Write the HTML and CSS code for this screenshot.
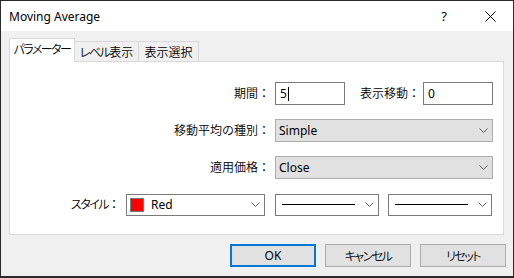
FILE: index.html
```html
<!DOCTYPE html>
<html lang="ja">
  <head>
    <meta charset="UTF-8" />
    <title>Moving Average</title>
    <link rel="stylesheet" href="styles.css">
  </head>
  <body>
    <div class="window">
      <div class="titlebar">
        <span class="title">Moving Average</span>
        <span class="caption-btn">?</span>
        <span class="caption-btn">
          <svg width="11" height="11" viewBox="0 0 11 11"><path d="M0.5 0.5 L10.5 10.5 M10.5 0.5 L0.5 10.5" stroke="#000" stroke-width="1" fill="none"/></svg>
        </span>
      </div>
      <div class="content">
        <div class="tabs">
          <div class="tab active"><span class="kana">パラメーター</span></div>
          <div class="tab second-tab"><span class="kana">レベル</span>表示</div>
          <div class="tab third-tab">表示選択</div>
        </div>
        <div class="panel">
          <div class="form">
            <span class="label">期間：</span>
            <div class="pair">
              <div class="input">5<span class="caret"></span></div>
              <span class="label inline">表示移動：</span>
              <div class="input">0</div>
            </div>
            <span class="label">移動平均の種別：</span>
            <div class="select">
              <span>Simple</span>
              <svg class="chev" width="9" height="5" viewBox="0 0 9 5"><path d="M0.5 0.5 L4.5 4.5 L8.5 0.5" stroke="#606060" fill="none"/></svg>
            </div>
            <span class="label">適用価格：</span>
            <div class="select">
              <span>Close</span>
              <svg class="chev" width="9" height="5" viewBox="0 0 9 5"><path d="M0.5 0.5 L4.5 4.5 L8.5 0.5" stroke="#606060" fill="none"/></svg>
            </div>
          </div>
          <div class="style-row">
            <span class="label style-label"><span class="kana">スタイル</span>：</span>
            <div class="combo color">
              <span class="swatch"></span>
              <span class="combo-text">Red</span>
              <svg class="chev" width="9" height="5" viewBox="0 0 9 5"><path d="M0.5 0.5 L4.5 4.5 L8.5 0.5" stroke="#606060" fill="none"/></svg>
            </div>
            <div class="combo line">
              <span class="stroke"></span>
              <svg class="chev" width="9" height="5" viewBox="0 0 9 5"><path d="M0.5 0.5 L4.5 4.5 L8.5 0.5" stroke="#606060" fill="none"/></svg>
            </div>
            <div class="combo line second">
              <span class="stroke"></span>
              <svg class="chev" width="9" height="5" viewBox="0 0 9 5"><path d="M0.5 0.5 L4.5 4.5 L8.5 0.5" stroke="#606060" fill="none"/></svg>
            </div>
          </div>
        </div>
      </div>
      <div class="buttons">
        <button class="btn default">OK</button>
        <button class="btn"><span class="kana">キャンセル</span></button>
        <button class="btn"><span class="kana">リセット</span></button>
      </div>
    </div>
  </body>
</html>
```

FILE: styles.css
```css
body {
  margin: 0;  font-family: "Noto Sans", "Noto Sans CJK JP", sans-serif;  font-size: 12px;  font-weight: 350;  color: #000;
}
.window {
  width: 514px;  height: 278px;  box-sizing: border-box;  border: 1px solid #2b2b2b;  border-bottom-width: 2px;  background-color: #f0f0f0;  display: flex;  flex-direction: column;
}
.titlebar {
  height: 30px;  background-color: #fff;  display: flex;  align-items: center;
}
.title {
  flex: 1;  padding-left: 8px;  font-weight: 400;
}
.caption-btn {
  width: 46px;  height: 30px;  display: flex;  align-items: center;  justify-content: center;  font-size: 13px;  font-weight: 400;
}
.content {
  padding: 8px 9px 0 8px;
}
.tabs {
  display: flex;  align-items: flex-end;  height: 23px;  margin-bottom: -1px;
}
.tab {
  height: 19px;  margin-bottom: 1px;  border: 1px solid #d9d9d9;  border-bottom: none;  margin-left: -1px;  display: flex;  align-items: center;  justify-content: center;  white-space: nowrap;  background-color: #f0f0f0;
}
.kana {
  font-feature-settings: "palt";  letter-spacing: -1.5px;
}
.tab.active {
  width: 64px;  height: 23px;  margin-bottom: 0;  margin-left: 0;  background-color: #fff;  position: relative;  z-index: 1;  align-items: flex-start;  line-height: 22px;
}
.tab.second-tab {
  width: 63px;
}
.tab.third-tab {
  width: 59px;
}
.panel {
  height: 174px;  box-sizing: border-box;  border: 1px solid #d9d9d9;  background-color: #fff;  padding: 20px 10px 0 0;
}
.form {
  display: grid;  grid-template-columns: 260px 218px;  column-gap: 5px;  row-gap: 14px;  align-items: center;
}
.label {
  text-align: right;  white-space: nowrap;  line-height: 23px;
}
.pair {
  display: flex;  align-items: center;
}
.label.inline {
  margin: 0 3px 0 15px;
}
.input {
  width: 70px;  height: 23px;  box-sizing: border-box;  border: 1px solid #7a7a7a;  padding-left: 4px;  line-height: 20px;  display: flex;  align-items: center;  font-weight: 400;
}
.caret {
  width: 1px;  height: 14px;  background-color: #000;  margin-left: 1px;
}
.select {
  height: 23px;  box-sizing: border-box;  border: 1px solid #adadad;  background-color: #e1e1e1;  padding: 0 3px 0 3px;  display: flex;  align-items: center;  justify-content: space-between;  font-weight: 400;
}
.chev {
  margin-right: 1px;
}
.style-row {
  display: flex;  align-items: center;  margin-top: 14px;  height: 23px;
}
.style-label {
  width: 110px;  margin-right: 6px;
}
.combo {
  height: 22px;  box-sizing: border-box;  border: 1px solid #7a7a7a;  background-color: #fff;  display: flex;  align-items: center;  padding: 0 3px;  font-weight: 400;
}
.combo.color {
  width: 139px;  margin-right: 10px;
}
.combo.line {
  width: 104px;  padding-left: 6px;
}
.combo.second {
  margin-left: 9px;
}
.swatch {
  width: 12px;  height: 12px;  background-color: #ff0000;  border: 1px solid #7a7a7a;
}
.combo-text {
  flex: 1;  margin-left: 7px;
}
.stroke {
  flex: 1;  height: 1px;  background-color: #000;  margin-right: 10px;
}
.buttons {
  display: flex;  justify-content: flex-end;  gap: 9px;  padding: 9px 7px 0 0;
}
.btn {
  width: 86px;  height: 23px;  box-sizing: border-box;  border: 1px solid #adadad;  background-color: #e1e1e1;  font-family: "Noto Sans", "Noto Sans CJK JP", sans-serif;  font-size: 12px;  font-weight: 350;  color: #000;  padding: 0;
}
.btn.default {
  border: 2px solid #0078d7;  font-weight: 400;
}
```
